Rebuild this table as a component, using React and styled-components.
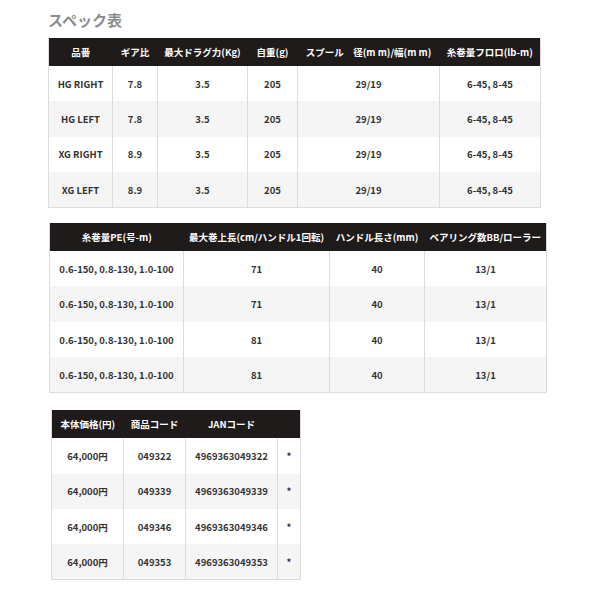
import React from 'react';
import styled, { createGlobalStyle } from 'styled-components';

const GlobalStyle = createGlobalStyle`
  html, body { margin: 0; padding: 0; background: #fff; }
  body { font-family: "Noto Sans CJK JP", "Noto Sans", sans-serif; color: #333; }
`;

const Page = styled.div`
  width: 600px;
  padding: 9px 0 0 48px;
  box-sizing: border-box;
`;

const Title = styled.h2`
  margin: 0 0 7px;
  font-size: 15px;
  line-height: 22px;
  font-weight: 700;
  color: #8c8c8c;
`;

const Table = styled.table`
  table-layout: fixed;
  border-collapse: collapse;
  width: ${p => p.$width}px;
  margin: 0 0 ${p => p.$gap}px ${p => p.$shift}px;
  border: 1px solid #dcdcdc;
  border-top: none;
  font-size: 9.5px;
  font-weight: 700;
  text-align: center;
`;

const HeadCell = styled.th`
  height: 28px;
  padding: 0 2px;
  background: #1f1b1b;
  color: #fff;
  font-weight: 700;
  white-space: nowrap;
  overflow: hidden;
`;

const Row = styled.tr`
  height: 35.4px;
  background: ${p => (p.$odd ? '#f5f5f5' : '#fff')};
`;

const Cell = styled.td`
  padding: 0 2px;
  border-left: 1px solid #dcdcdc;
  color: #333;
  white-space: nowrap;
  &:first-child { border-left: none; }
`;

function SpecTable({ widths, head, rows, shift = 0, gap = 0 }) {
  const total = widths.reduce((a, b) => a + b, 0);
  return (
    <Table $width={total} $shift={shift} $gap={gap}>
      <colgroup>
        {widths.map((w, i) => <col key={i} style={{ width: w }} />)}
      </colgroup>
      <thead>
        <tr>{head.map((h, i) => <HeadCell key={i}>{h}</HeadCell>)}</tr>
      </thead>
      <tbody>
        {rows.map((r, i) => (
          <Row key={i} $odd={i % 2 === 1}>
            {r.map((c, j) => <Cell key={j}>{c}</Cell>)}
          </Row>
        ))}
      </tbody>
    </Table>
  );
}

const t1 = [
  ['HG RIGHT', '7.8', '3.5', '205', '29/19', '6-45, 8-45'],
  ['HG LEFT', '7.8', '3.5', '205', '29/19', '6-45, 8-45'],
  ['XG RIGHT', '8.9', '3.5', '205', '29/19', '6-45, 8-45'],
  ['XG LEFT', '8.9', '3.5', '205', '29/19', '6-45, 8-45'],
];

const pe = '0.6-150, 0.8-130, 1.0-100';
const t2 = [
  [pe, '71', '40', '13/1'],
  [pe, '71', '40', '13/1'],
  [pe, '81', '40', '13/1'],
  [pe, '81', '40', '13/1'],
];

const t3 = [
  ['64,000円', '049322', '4969363049322', '*'],
  ['64,000円', '049339', '4969363049339', '*'],
  ['64,000円', '049346', '4969363049346', '*'],
  ['64,000円', '049353', '4969363049353', '*'],
];

export default function App() {
  return (
    <Page>
      <GlobalStyle />
      <Title>スペック表</Title>
      <SpecTable
        widths={[64, 45, 90, 50, 142, 101]}
        head={['品番', 'ギア比', '最大ドラグ力(Kg)', '自重(g)', 'スプール　径(m m)/幅(m m)', '糸巻量フロロ(lb-m)']}
        rows={t1}
        gap={15}
      />
      <SpecTable
        widths={[134, 146, 95, 122]}
        head={['糸巻量PE(号-m)', '最大巻上長(cm/ハンドル1回転)', 'ハンドル長さ(mm)', 'ベアリング数BB/ローラー']}
        rows={t2}
        shift={1}
        gap={17}
      />
      <SpecTable
        widths={[72, 62, 92, 23]}
        head={['本体価格(円)', '商品コード', 'JANコード', '']}
        rows={t3}
        shift={3}
      />
    </Page>
  );
}
